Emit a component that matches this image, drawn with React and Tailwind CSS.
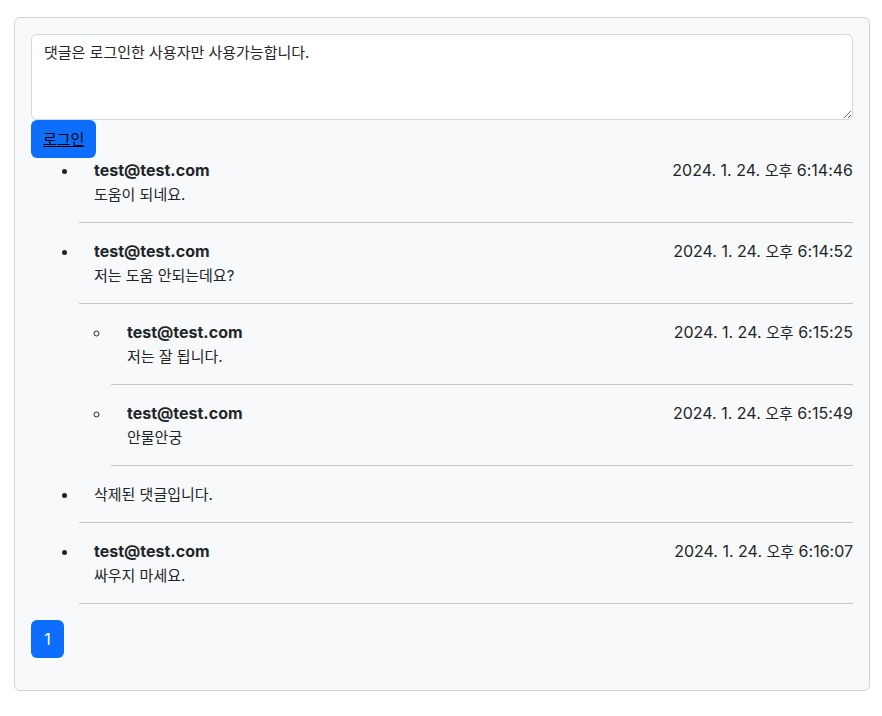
const COMMENTS = [
  { id: 1, email: 'test@test.com', time: '6:14:46', body: '도움이 되네요.' },
  {
    id: 2,
    email: 'test@test.com',
    time: '6:14:52',
    body: '저는 도움 안되는데요?',
    replies: [
      { id: 3, email: 'test@test.com', time: '6:15:25', body: '저는 잘 됩니다.' },
      { id: 4, email: 'test@test.com', time: '6:15:49', body: '안물안궁' },
    ],
  },
  { id: 5, deleted: true, body: '삭제된 댓글입니다.' },
  { id: 6, email: 'test@test.com', time: '6:16:07', body: '싸우지 마세요.' },
]

const ko = 'text-[15px]'

function Comment({ c, pad }) {
  return (
    <>
      <div className={pad}>
        {!c.deleted && (
          <div className="flex h-6 justify-between overflow-hidden">
            <span className="font-bold">{c.email}</span>
            <span>
              2024. 1. 24. <span className={ko}>오후</span> {c.time}
            </span>
          </div>
        )}
        <div className="h-6 overflow-hidden">
          <span className={ko}>{c.body}</span>
        </div>
      </div>
      <hr className="my-4 border-t border-[#c6c7c8]" />
    </>
  )
}

export default function App() {
  return (
    <div
      className="pt-[17px] pl-[14px] text-[16px] leading-6 text-[#212529]"
      style={{ fontFamily: 'Inter, "Noto Sans CJK KR", sans-serif' }}
    >
      <div className="w-[856px] rounded-md border border-[#d1d3d6] bg-[#f8f9fa] p-4">
        <textarea
          readOnly
          className={`block h-[86px] w-full resize-y rounded-[6px] border border-[#d4d7db] bg-white px-3 py-1.5 ${ko} text-[#212529] outline-none`}
          value="댓글은 로그인한 사용자만 사용가능합니다."
        />
        <button className="block h-[38px] rounded-[6px] bg-[#0d6efd] px-3 text-black">
          <span className={`${ko} underline`}>로그인</span>
        </button>

        <ul className="list-disc pl-[48px]">
          {COMMENTS.map(c => (
            <li key={c.id}>
              <Comment c={c} pad="pl-[15px]" />
              {c.replies && (
                <ul className="list-[circle] pl-[32px]">
                  {c.replies.map(r => (
                    <li key={r.id}>
                      <Comment c={r} pad="pl-[16px]" />
                    </li>
                  ))}
                </ul>
              )}
            </li>
          ))}
        </ul>

        <div className="mb-4 flex">
          <button className="h-[38px] w-[33px] rounded-[6px] bg-[#0d6efd] text-white">1</button>
        </div>
      </div>
    </div>
  )
}
